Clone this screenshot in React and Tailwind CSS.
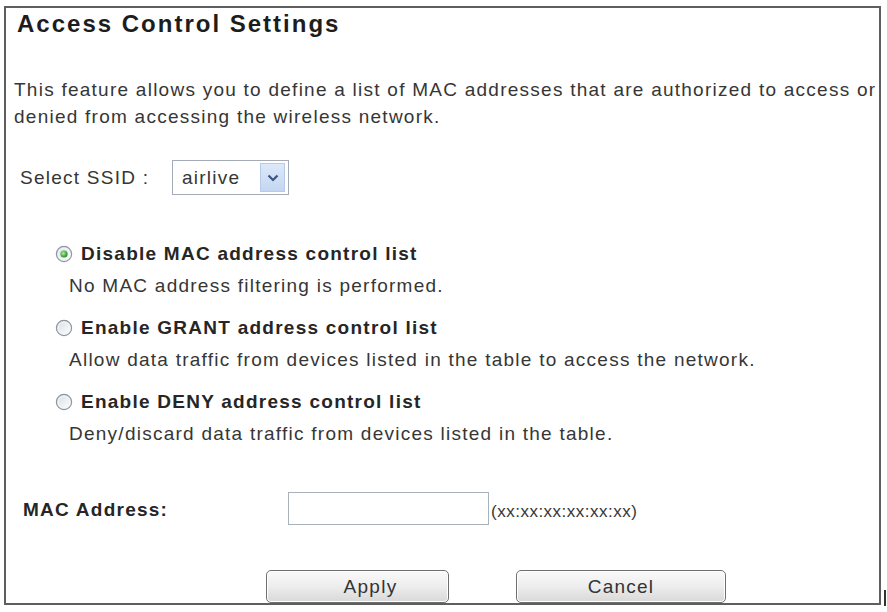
import { useState } from 'react';

const TEXT = "text-[19px] leading-[26px] tracking-[1.25px]";

const OPTIONS = [
  { id: 'disable', label: 'Disable MAC address control list', hint: 'No MAC address filtering is performed.' },
  { id: 'grant', label: 'Enable GRANT address control list', hint: 'Allow data traffic from devices listed in the table to access the network.' },
  { id: 'deny', label: 'Enable DENY address control list', hint: 'Deny/discard data traffic from devices listed in the table.' },
];

// Vista-style radio button
function Radio({ checked }) {
  const gid = checked ? 'radio-on' : 'radio-off';
  return (
    <svg width="18" height="18" viewBox="0 0 18 18" className="shrink-0">
      <defs>
        <linearGradient id={gid} x1="0" y1="0" x2="1" y2="1">
          <stop offset="0" stopColor="#d9dde2" />
          <stop offset="1" stopColor="#ffffff" />
        </linearGradient>
        <radialGradient id="radio-dot" cx="0.4" cy="0.4" r="0.6">
          <stop offset="0" stopColor="#b6f0a8" />
          <stop offset="0.6" stopColor="#52b84a" />
          <stop offset="1" stopColor="#2f8a2f" />
        </radialGradient>
      </defs>
      <circle cx="9" cy="9" r="7.6" fill={`url(#${gid})`} stroke="#8c97a3" strokeWidth="1.2" />
      <circle cx="9" cy="9" r="5.8" fill="none" stroke="#f4f6f8" strokeWidth="1" />
      {checked && <circle cx="9" cy="9" r="3.6" fill="url(#radio-dot)" />}
    </svg>
  );
}

function Button({ children, className }) {
  return (
    <button
      className={`h-[33px] rounded-[5px] border border-[#6f6f6f] bg-linear-to-b from-[#fafafa] via-[#ededed] to-[#d8d8d8] text-[#333] shadow-[inset_0_0_0_1px_#ffffff] ${TEXT} ${className}`}
    >
      {children}
    </button>
  );
}

export default function App() {
  const [mode, setMode] = useState('disable');
  const [mac, setMac] = useState('');

  return (
    <div className="flex min-h-[612px] w-[887px] items-start bg-white pl-[4px] pt-[6px] font-['Liberation_Sans',Arial,sans-serif] text-[#363636]">
      <div className="flex h-[599px] w-[877px] flex-col border-2 border-[#5e5e5e]">
        <h1 className="ml-[11px] mt-[2px] text-[24px] font-bold leading-[28px] tracking-[2px] text-[#1d1d1d]">
          Access Control Settings
        </h1>

        <p className="ml-[8px] mt-[38px] whitespace-nowrap text-[19px] leading-[27px] tracking-[1.25px]">
          This feature allows you to define a list of MAC addresses that are authorized to access or
          <br />
          denied from accessing the wireless network.
        </p>

        <div className="ml-[14px] mt-[30px] flex items-center">
          <span className={`w-[152px] ${TEXT}`}>Select SSID :</span>
          <div className="flex h-[35px] w-[117px] items-center justify-between border border-[#a4abb6] bg-white pl-[9px] pr-[3px]">
            <span className={TEXT}>airlive</span>
            <span className="flex h-[29px] w-[25px] items-center justify-center border border-[#b5cbe9] bg-linear-to-b from-[#dde9f9] to-[#c3d6f2]">
              <svg width="12" height="8" viewBox="0 0 12 8">
                <path d="M1.5 1.5 L6 6 L10.5 1.5" fill="none" stroke="#3c5482" strokeWidth="2.2" />
              </svg>
            </span>
          </div>
        </div>

        <div className="mt-[46px] flex flex-col gap-[16px]">
          {OPTIONS.map((o) => (
            <div key={o.id} className="flex flex-col">
              <label onClick={() => setMode(o.id)} className="ml-[49px] flex h-[26px] cursor-pointer items-center gap-[8px]">
                <Radio checked={mode === o.id} />
                <span className={`font-bold text-[#262626] ${TEXT}`}>{o.label}</span>
              </label>
              <span className={`ml-[63px] mt-[6px] whitespace-nowrap ${TEXT}`}>{o.hint}</span>
            </div>
          ))}
        </div>

        <div className="ml-[17px] mt-[45px] flex items-center">
          <span className={`mt-[3px] w-[265px] font-bold text-[#262626] ${TEXT}`}>MAC Address:</span>
          <input
            value={mac}
            onChange={(e) => setMac(e.target.value)}
            className="h-[33px] w-[201px] border border-[#a9b1ba] bg-white px-1 outline-none"
          />
          <span className="ml-[2px] mt-[6px] text-[17px] leading-[20px] tracking-[0.5px]">(xx:xx:xx:xx:xx:xx)</span>
        </div>

        <div className="ml-[260px] mt-auto flex gap-[67px]">
          <Button className="w-[183px] pl-[26px]">Apply</Button>
          <Button className="w-[210px]">Cancel</Button>
        </div>
      </div>
      <span className="ml-[3px] mt-[584px] h-[16px] w-[2px] bg-[#333]" />
    </div>
  );
}
